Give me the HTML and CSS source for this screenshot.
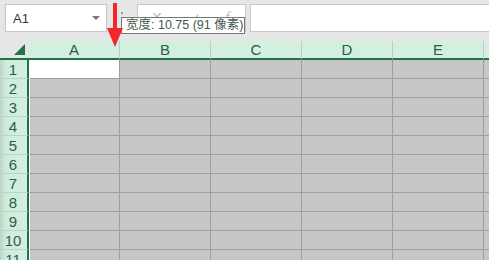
FILE: index.html
```html
<!DOCTYPE html>
<html lang="zh-CN">
<head>
    <meta charset="UTF-8">
    <title>工作表</title>
    <link rel="stylesheet" href="styles.css">
</head>
<body>
    <!-- Barra de fórmulas -->
    <div class="toolbar">
        <div class="name-box">
            <span>A1</span>
            <span class="caret"></span>
        </div>
        <div class="grip">
            <span></span><span></span><span></span>
        </div>
        <div class="fx-buttons">
            <span class="fx-icon">✕</span>
            <span class="fx-icon">✓</span>
            <span class="fx-icon fx-f">f</span>
        </div>
        <div class="formula-input"></div>
    </div>

    <!-- Planilha -->
    <div class="sheet">
        <div class="corner"><span class="corner-tri"></span></div>
        <div class="col-head">A</div>
        <div class="col-head">B</div>
        <div class="col-head">C</div>
        <div class="col-head">D</div>
        <div class="col-head">E</div>
        <div class="col-head last"></div>
    </div>

    <div class="tooltip">宽度: 10.75 (91 像素)</div>

    <svg class="cursor" width="20" height="48" viewBox="0 0 20 48">
        <rect x="7" y="3" width="4" height="27" fill="#f0282a"/>
        <polygon points="1,28 17,28 9,47" fill="#f0282a"/>
    </svg>

    <script>
        // Monta as linhas da planilha
        const sheet = document.querySelector(".sheet");
        for (let r = 1; r <= 11; r++) {
            const head = document.createElement("div");
            head.className = "row-head";
            head.textContent = r;
            sheet.appendChild(head);
            for (let c = 0; c < 6; c++) {
                const cell = document.createElement("div");
                cell.className = "cell";
                if (c === 0) cell.classList.add("first");
                if (c === 5) cell.classList.add("last");
                if (r === 1 && c === 0) cell.classList.add("active");
                sheet.appendChild(cell);
            }
        }
    </script>
</body>
</html>
```

FILE: styles.css
```css
body {
    margin: 0;
    background-color: #e6e6e6;
    font-family: "Liberation Sans", Arial, sans-serif;
    overflow: hidden;
    height: 260px;
    position: relative;
}

/* Barra de fórmulas */
.toolbar {
    height: 41px;
    display: flex;
    align-items: flex-start;
    padding-top: 4px;
    box-sizing: border-box;
}
.name-box {
    margin-left: 5px;
    width: 102px;
    height: 28px;
    box-sizing: border-box;
    background: #fff;
    border: 1px solid #c8c8c8;
    display: flex;
    align-items: center;
    justify-content: space-between;
    padding: 0 6px 0 7px;
    font-size: 13px;
    color: #333;
}
.caret {
    width: 0;
    height: 0;
    border-left: 4px solid transparent;
    border-right: 4px solid transparent;
    border-top: 4px solid #7a7a7a;
}
.grip {
    width: 30px;
    height: 28px;
    display: flex;
    flex-direction: column;
    align-items: center;
    justify-content: center;
    gap: 3px;
}
.grip span {
    width: 2px;
    height: 2px;
    background: #9a9a9a;
}
.fx-buttons {
    width: 109px;
    height: 28px;
    box-sizing: border-box;
    background: #fff;
    border: 1px solid #c8c8c8;
    display: flex;
    align-items: flex-start;
    padding: 4px 0 0 13px;
    gap: 26px;
    font-size: 14px;
    color: #bdbdbd;
}
.fx-f {
    font-style: italic;
    font-family: "Liberation Serif", serif;
    font-size: 16px;
}
.formula-input {
    flex: 1;
    margin-left: 4px;
    margin-right: -10px;
    height: 28px;
    box-sizing: border-box;
    background: #fff;
    border: 1px solid #c8c8c8;
}

/* Planilha */
.sheet {
    display: grid;
    grid-template-columns: 29px 91px 91px 91px 91px 91px 1fr;
    grid-auto-rows: 19px;
    background: #fff;
}
.corner {
    background: #e6e6e6;
    border-bottom: 2px solid #217346;
    position: relative;
}
.corner-tri {
    position: absolute;
    left: 14px;
    top: 3px;
    width: 0;
    height: 0;
    border-left: 11px solid transparent;
    border-bottom: 11px solid #217346;
}
.col-head {
    background: #d3efdf;
    border-right: 1px solid #c2c9c4;
    border-bottom: 2px solid #217346;
    display: flex;
    align-items: center;
    justify-content: center;
    font-size: 15px;
    color: #27604a;
}
.col-head.last {
    border-right: none;
}
.row-head {
    background: linear-gradient(to right, #bcd6c7, #d0ecdc 6px, #d3efdf);
    border-right: 2px solid #217346;
    border-bottom: 1px solid #bcd3c5;
    display: flex;
    align-items: center;
    justify-content: center;
    padding-right: 1px;
    font-size: 15px;
    color: #27604a;
}
.cell {
    background: #c6c6c6;
    border-right: 1px solid #9e9e9e;
    border-bottom: 1px solid #9e9e9e;
}
.cell.first {
    border-left: 1px solid #fff;
}
.cell.active {
    background: #fff;
}
.cell.last {
    border-right: none;
}

/* Dica e cursor */
.tooltip {
    position: absolute;
    left: 121px;
    top: 17px;
    width: 124px;
    height: 17px;
    box-sizing: border-box;
    background: #fff;
    border: 1px solid #767676;
    font-family: "Liberation Sans", "Noto Sans CJK SC", sans-serif;
    font-size: 12.5px;
    line-height: 15px;
    padding-left: 4px;
    color: #3f5a4e;
    white-space: nowrap;
    overflow: hidden;
}
.cursor {
    position: absolute;
    left: 106px;
    top: 0;
}
```
